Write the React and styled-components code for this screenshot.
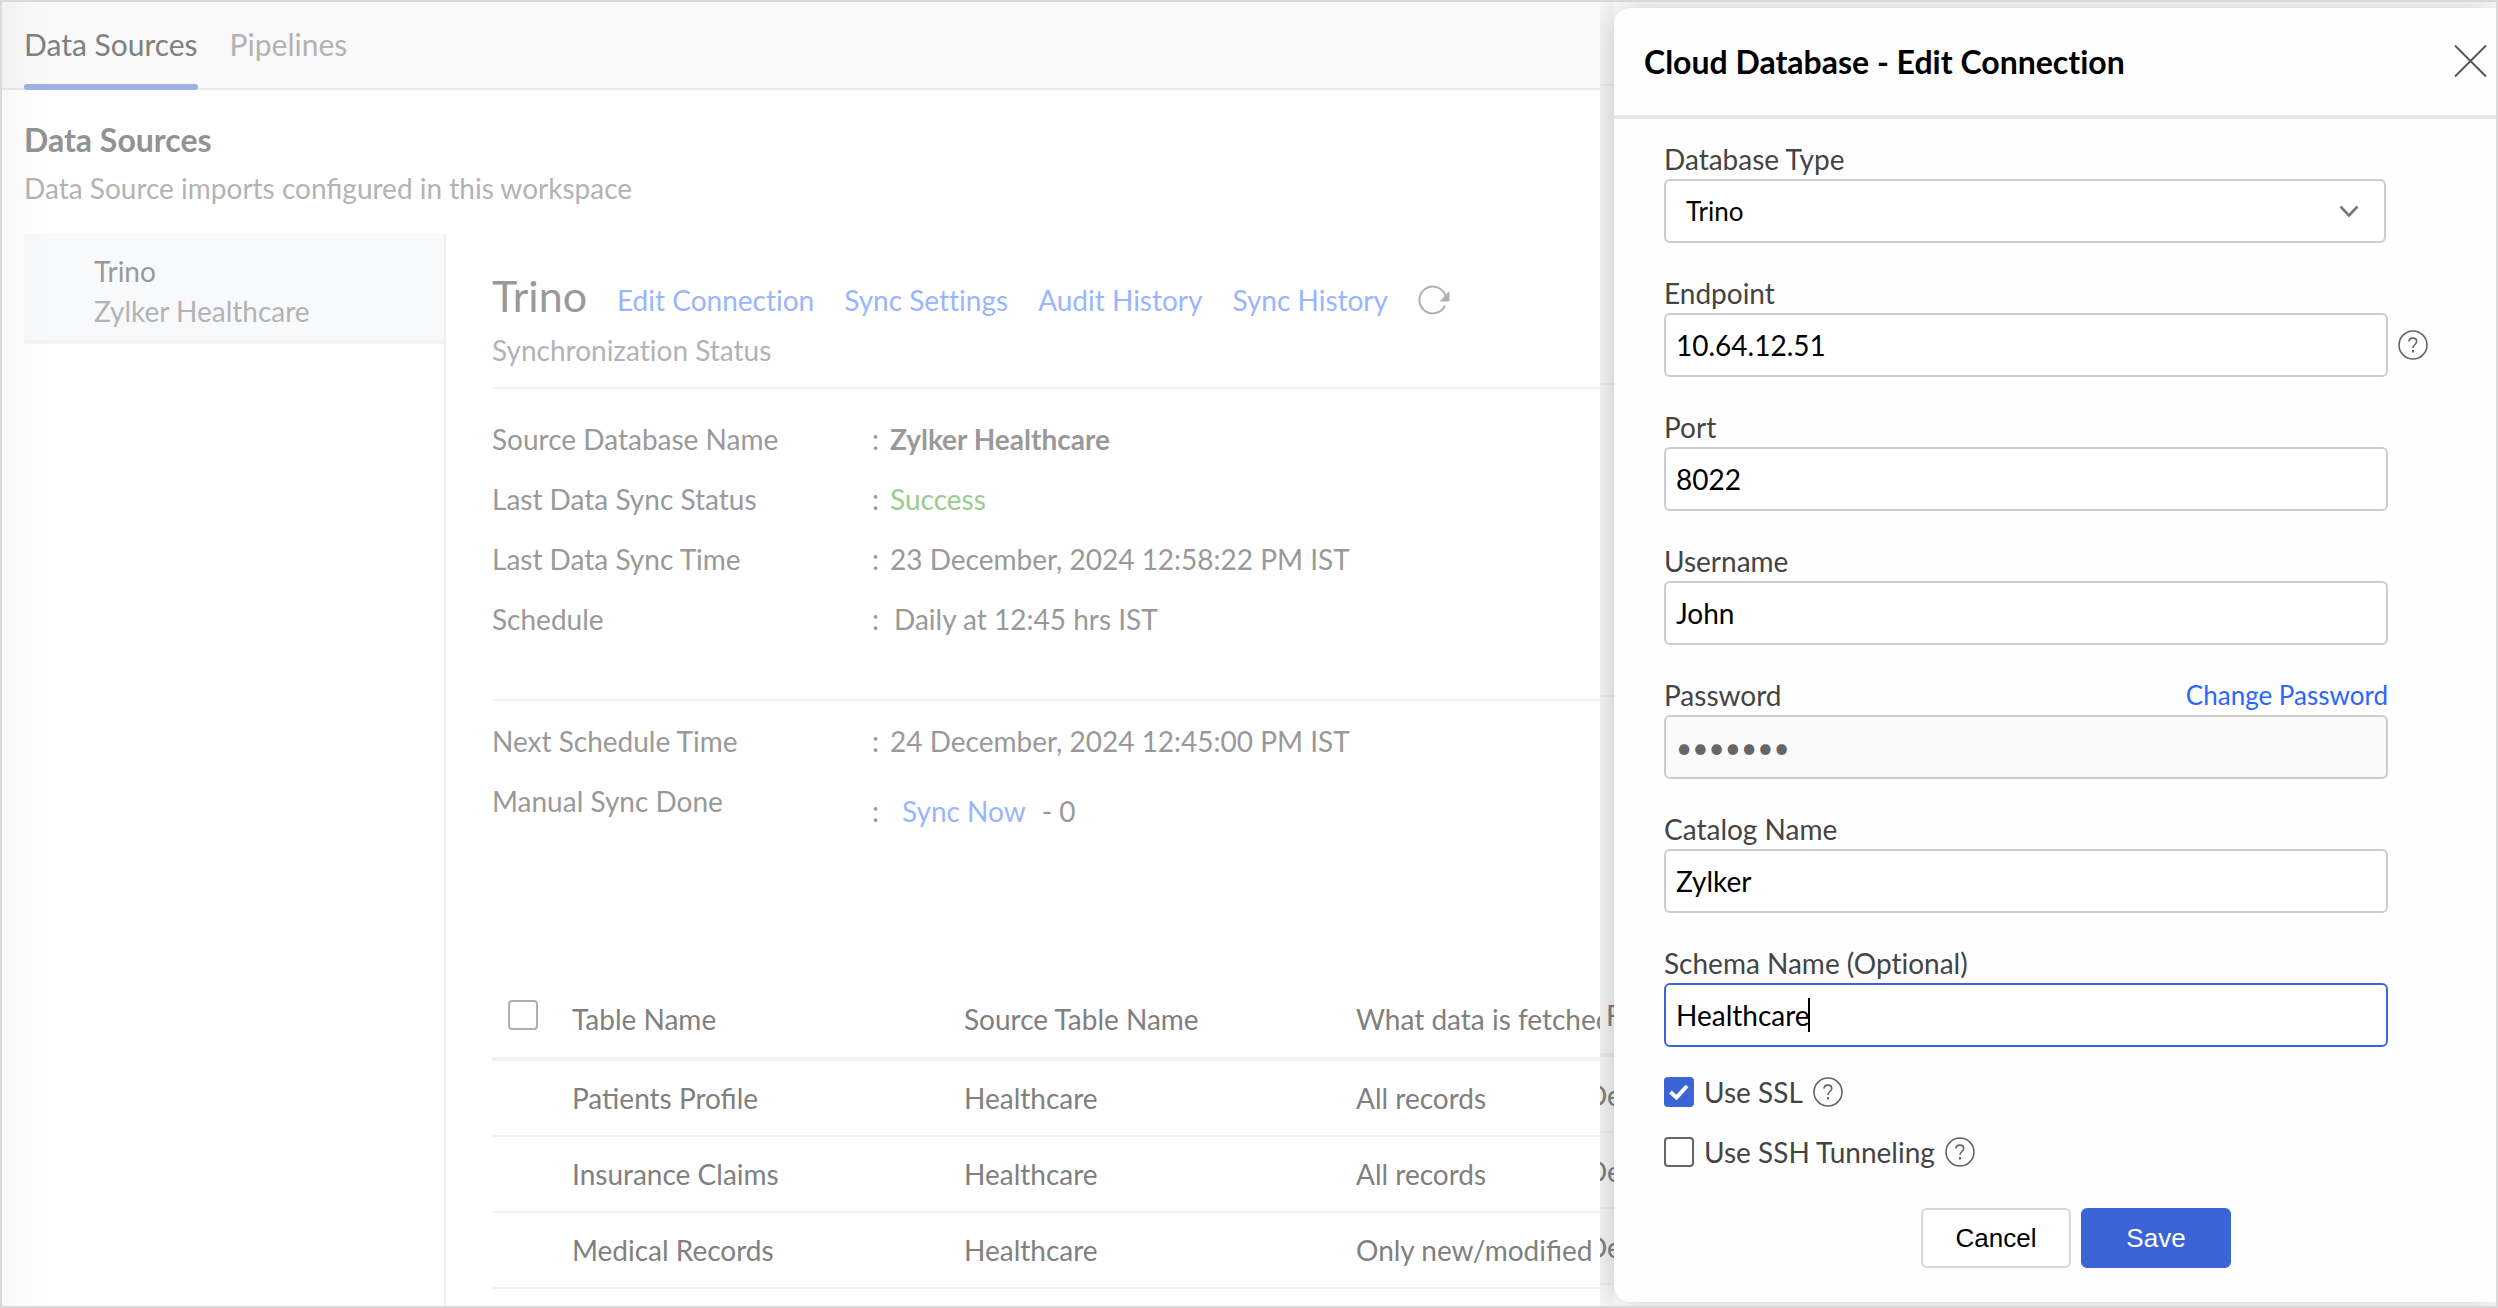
import React, { useState } from "react"
import styled, { createGlobalStyle } from "styled-components"

const GlobalStyle = createGlobalStyle`
    * {
        box-sizing: border-box;
    }

    body {
        margin: 0;
        background-color: #fff;
        font-family: Lato, "Liberation Sans", sans-serif;
        font-size: 28px;
        font-variant-ligatures: no-common-ligatures;
        line-height: 40px;
    }

    h1, h2, p {
        margin: 0;
    }
`;

const Page = styled.div`
    display: flex;
    min-height: 100vh;
    border: 2px solid #d9d9d9;
    overflow: hidden;
`;

/* ---------- workspace ---------- */

const Workspace = styled.main`
    flex: 1;
    min-width: 0;
    display: flex;
    flex-direction: column;
    position: relative;
    overflow: hidden;

    &::after {
        content: "";
        position: absolute;
        top: 0;
        bottom: 0;
        left: 0;
        width: 44px;
        background: linear-gradient(to right, rgba(0, 0, 0, 0.03), rgba(0, 0, 0, 0));
        pointer-events: none;
    }
`;

const TabBar = styled.nav`
    display: flex;
    gap: 32px;
    padding: 0 22px;
    background-color: #f9f9f9;
    border-bottom: 2px solid #ebebeb;
`;

const Tab = styled.a`
    position: relative;
    padding: 22px 0;
    margin-bottom: -2px;
    font-size: 30px;
    line-height: 40px;
    height: 88px;
    color: ${(props) => (props.$active ? "#808080" : "#b3b3b3")};
    text-decoration: none;

    &::after {
        content: "";
        display: ${(props) => (props.$active ? "block" : "none")};
        position: absolute;
        left: 0;
        right: 0;
        bottom: 0;
        height: 6px;
        border-radius: 3px;
        background-color: #9db0e9;
    }
`;

const Intro = styled.header`
    padding: 30px 22px 26px;
`;

const IntroTitle = styled.h1`
    font-size: 32px;
    line-height: 40px;
    color: #929292;
`;

const IntroText = styled.p`
    margin-top: 8px;
    color: #b3b3b3;
    font-variant-ligatures: common-ligatures;
`;

const Columns = styled.div`
    flex: 1;
    display: flex;
    padding-left: 22px;
`;

const SourceList = styled.aside`
    flex: 0 0 422px;
    border-right: 2px solid #f0f0f0;
`;

const SourceItem = styled.div`
    padding: 17px 0 9px 70px;
    background-color: #f8f9fb;
    border-bottom: 4px solid #f2f3f4;
`;

const SourceName = styled.div`
    color: #999;
`;

const SourceDatabase = styled.div`
    color: #b3b3b3;
`;

const Detail = styled.section`
    flex: 1;
    min-width: 0;
    padding: 38px 0 0 46px;
`;

const DetailHeader = styled.div`
    display: flex;
    align-items: flex-end;
    gap: 30px;
`;

const DetailTitle = styled.h2`
    font-size: 43px;
    font-weight: 400;
    line-height: 48px;
    color: #999;
`;

const Link = styled.a`
    color: #99b5ff;
    text-decoration: none;
`;

const RefreshButton = styled.button`
    display: flex;
    align-items: center;
    height: 40px;
    padding: 0;
    border: 0;
    background: none;
    color: #b0b0b0;
`;

const Status = styled.p`
    padding: 10px 0 17px;
    border-bottom: 2px solid #f2f2f2;
    color: #b3b3b3;
`;

const Facts = styled.dl`
    margin: 0;
    padding: ${(props) => (props.$last ? "10px 0 136px" : "20px 0 50px")};
    border-bottom: ${(props) => (props.$last ? "0" : "2px solid #f2f2f2")};
    line-height: 60px;
    color: #999;
`;

const Fact = styled.div`
    display: grid;
    grid-template-columns: 380px 18px 1fr;
    align-items: start;

    &::before {
        content: ":";
        grid-column: 2;
        grid-row: 1;
        padding-top: ${(props) => (props.$lowered ? 10 : 0)}px;
    }
`;

const FactLabel = styled.dt`
    grid-column: 1;
    grid-row: 1;
`;

const FactValue = styled.dd`
    grid-column: 3;
    grid-row: 1;
    margin: 0;
    padding-left: ${(props) => props.$indent || 0}px;
    padding-top: ${(props) => (props.$lowered ? 10 : 0)}px;
    color: ${(props) => props.$color || "inherit"};
    font-weight: ${(props) => (props.$bold ? 700 : 400)};

    a {
        margin-right: 16px;
    }
`;

const Tables = styled.table`
    width: 100%;
    table-layout: fixed;
    border-collapse: separate;
    border-spacing: 0;
    color: #808080;
    font-variant-ligatures: common-ligatures;
    text-align: left;
    white-space: nowrap;
`;

const Th = styled.th`
    width: ${(props) => props.$width || "auto"};
    height: 84px;
    padding: ${(props) => (props.$check ? "0 0 4px 16px" : "4px 0 0")};
    border-bottom: 4px solid #f2f2f2;
    font-weight: 400;
`;

const Td = styled.td`
    height: 76px;
    padding: 0;
    border-bottom: 2px solid #f2f2f2;
`;

/* ---------- drawer ---------- */

const DrawerArea = styled.div`
    flex: 0 0 896px;
    display: flex;
    overflow: hidden;
    background-color: #fff;
`;

const Behind = styled.div`
    flex: 0 0 14px;
    overflow: hidden;
    background-color: #f8f8f8;
    color: #808080;
    white-space: nowrap;
`;

const BehindCell = styled.div`
    display: flex;
    align-items: flex-end;
    height: ${(props) => props.$height}px;
    padding-bottom: ${(props) => props.$bottom || 0}px;
    text-indent: ${(props) => props.$indent || 0}px;
    border-bottom: ${(props) => (props.$heavy ? 4 : 2)}px solid #eee;
`;

const Drawer = styled.form`
    flex: 1;
    display: flex;
    flex-direction: column;
    margin: 6px 0 4px;
    border-radius: 16px 0 0 16px;
    background-color: #fefefe;
    box-shadow: 0 0 36px rgba(0, 0, 0, 0.22);
    color: #444;
`;

const DrawerHeader = styled.header`
    display: flex;
    align-items: center;
    justify-content: space-between;
    height: 111px;
    padding: 0 8px 0 30px;
    border-bottom: 4px solid #e6e6e6;
`;

const DrawerTitle = styled.h2`
    font-size: 32px;
    line-height: 40px;
    color: #000;
`;

const CloseButton = styled.button`
    display: flex;
    padding: 0;
    border: 0;
    background: none;
    color: #555;
`;

const Fields = styled.div`
    display: flex;
    flex-direction: column;
    gap: 30px;
    padding: 20px 0 0 50px;
`;

const FieldGrid = styled.div`
    display: grid;
    grid-template-columns: 1fr 98px;
    column-gap: 10px;
    align-items: center;
`;

const FieldTop = styled.div`
    grid-column: 1;
    display: flex;
    justify-content: space-between;
`;

const ChangeLink = styled.a`
    font-size: 26px;
    color: #2c66fc;
    text-decoration: none;
`;

const InputBox = styled.div`
    grid-column: 1;
    display: flex;
    align-items: center;
    height: 64px;
    padding-left: 10px;
    border: 2px solid ${(props) => (props.$active ? "#3b65d6" : "#ccc")};
    border-radius: 6px;
    background-color: ${(props) => (props.$disabled ? "#fafafa" : "#fff")};
`;

const Input = styled.input`
    flex: ${(props) => (props.$fit ? "none" : 1)};
    field-sizing: ${(props) => (props.$fit ? "content" : "fixed")};
    min-width: 0;
    height: 40px;
    padding: 0;
    border: 0;
    outline: 0;
    background: none;
    font: inherit;
    color: ${(props) => (props.disabled ? "#666" : "#000")};
`;

const Caret = styled.span`
    width: 2px;
    height: 34px;
    margin-left: -2px;
    background-color: #000;
`;

const SelectBox = styled.div`
    position: relative;
    grid-column: 1;
    margin-right: 2px;

    svg {
        position: absolute;
        right: 27px;
        top: 26px;
        pointer-events: none;
    }
`;

const Select = styled.select`
    display: block;
    width: 100%;
    height: 64px;
    padding: 0 60px 0 20px;
    appearance: none;
    border: 2px solid #ccc;
    border-radius: 6px;
    background-color: #fff;
    font: inherit;
    font-size: 26px;
    color: #000;
`;

const Options = styled.div`
    display: flex;
    align-items: center;
    gap: 10px;
    height: 30px;
`;

const CheckWrap = styled.span`
    position: relative;
    display: flex;
    width: 30px;

    svg {
        position: absolute;
        left: 5px;
        top: 7px;
        pointer-events: none;
    }
`;

const CheckInput = styled.input`
    appearance: none;
    width: 30px;
    height: 30px;
    margin: 0;
    border: 2px solid ${(props) => props.$line};
    border-radius: 4px;
    background-color: #fff;

    &:checked {
        border-color: #3b65d6;
        background-color: #3b65d6;
    }
`;

const HelpButton = styled.button`
    display: flex;
    width: 30px;
    padding: 0;
    border: 0;
    background: none;
    color: #666;
`;

const Actions = styled.div`
    display: flex;
    justify-content: center;
    gap: 10px;
    padding: 41px 0 34px 42px;
`;

const Button = styled.button`
    width: 150px;
    height: 60px;
    border: 2px solid ${(props) => (props.$primary ? "#3b65d6" : "#d6d6d6")};
    border-radius: 6px;
    background-color: ${(props) => (props.$primary ? "#3b65d6" : "#fff")};
    color: ${(props) => (props.$primary ? "#fff" : "#000")};
    font-family: "Liberation Sans", Arial, sans-serif;
    font-size: 26px;
`;

function Help({ label })
{
    return(
        <HelpButton type="button" aria-label={label}>
            <svg width="30" height="30" viewBox="0 0 30 30" fill="none" stroke="currentColor">
                <circle cx="15" cy="15" r="14" strokeWidth="1.6"/>
                <path d="M11 11.6C11 9.4 12.7 8.1 14.8 8.1C17 8.1 18.7 9.4 18.7 11.4C18.7 14.4 15 14.6 15 18" strokeWidth="1.6"/>
                <path d="M15 20V22.4" strokeWidth="2"/>
            </svg>
        </HelpButton>
    )
}

function Check({ id, line = "#666", checked, onChange, label })
{
    return(
        <CheckWrap>
            <CheckInput type="checkbox" id={id} $line={line} checked={checked} onChange={onChange} aria-label={label}/>
            {checked &&
                <svg width="20" height="16" viewBox="0 0 20 16" fill="none" stroke="#fff" strokeWidth="4">
                    <path d="M1.5 8L7.5 13.5L18 2"/>
                </svg>
            }
        </CheckWrap>
    )
}

function Field({ id, label, type = "text", value, disabled, active, link, help })
{
    return(
        <FieldGrid>
            <FieldTop>
                <label htmlFor={id}>{label}</label>
                {link && <ChangeLink href="#password">{link}</ChangeLink>}
            </FieldTop>
            <InputBox $active={active} $disabled={disabled}>
                <Input id={id} type={type} defaultValue={value} disabled={disabled} $fit={active}/>
                {active && <Caret/>}
            </InputBox>
            {help && <Help label={help}/>}
        </FieldGrid>
    )
}

const links = ["Edit Connection", "Sync Settings", "Audit History", "Sync History"];

const rows = [
    ["Patients Profile", "Healthcare", "All records"],
    ["Insurance Claims", "Healthcare", "All records"],
    ["Medical Records", "Healthcare", "Only new/modified records"],
];

export default function App()
{
    const [all, setAll] = useState(false);
    const [ssl, setSsl] = useState(true);
    const [ssh, setSsh] = useState(false);

    return(
        <>
            <GlobalStyle/>
            <Page>
                <Workspace>
                    <TabBar>
                        <Tab href="#sources" $active>Data Sources</Tab>
                        <Tab href="#pipelines">Pipelines</Tab>
                    </TabBar>
                    <Intro>
                        <IntroTitle>Data Sources</IntroTitle>
                        <IntroText>Data Source imports configured in this workspace</IntroText>
                    </Intro>
                    <Columns>
                        <SourceList>
                            <SourceItem>
                                <SourceName>Trino</SourceName>
                                <SourceDatabase>Zylker Healthcare</SourceDatabase>
                            </SourceItem>
                        </SourceList>
                        <Detail>
                            <DetailHeader>
                                <DetailTitle>Trino</DetailTitle>
                                {links.map((text) => <Link key={text} href="#detail">{text}</Link>)}
                                <RefreshButton type="button" aria-label="Refresh">
                                    <svg width="32" height="30" viewBox="0 0 32 30" fill="none" stroke="currentColor">
                                        <path d="M27 20.5A13.4 13.4 0 1 1 27.6 11" strokeWidth="2"/>
                                        <path d="M31.5 6V16.5H21.5Z" fill="currentColor" stroke="none"/>
                                    </svg>
                                </RefreshButton>
                            </DetailHeader>
                            <Status>Synchronization Status</Status>
                            <Facts>
                                <Fact>
                                    <FactLabel>Source Database Name</FactLabel>
                                    <FactValue $bold>Zylker Healthcare</FactValue>
                                </Fact>
                                <Fact>
                                    <FactLabel>Last Data Sync Status</FactLabel>
                                    <FactValue $color="#99cc8f">Success</FactValue>
                                </Fact>
                                <Fact>
                                    <FactLabel>Last Data Sync Time</FactLabel>
                                    <FactValue>23 December, 2024 12:58:22 PM IST</FactValue>
                                </Fact>
                                <Fact>
                                    <FactLabel>Schedule</FactLabel>
                                    <FactValue $indent={4}>Daily at 12:45 hrs IST</FactValue>
                                </Fact>
                            </Facts>
                            <Facts $last>
                                <Fact>
                                    <FactLabel>Next Schedule Time</FactLabel>
                                    <FactValue>24 December, 2024 12:45:00 PM IST</FactValue>
                                </Fact>
                                <Fact $lowered>
                                    <FactLabel>Manual Sync Done</FactLabel>
                                    <FactValue $indent={12} $lowered><Link href="#sync">Sync Now</Link>- 0</FactValue>
                                </Fact>
                            </Facts>
                            <Tables>
                                <thead>
                                    <tr>
                                        <Th $width="80px" $check>
                                            <Check line="#b0b0b0" checked={all} onChange={() => setAll(!all)} label="Select all tables"/>
                                        </Th>
                                        <Th $width="392px">Table Name</Th>
                                        <Th $width="392px">Source Table Name</Th>
                                        <Th>What data is fetched</Th>
                                    </tr>
                                </thead>
                                <tbody>
                                    {rows.map((row) => (
                                        <tr key={row[0]}>
                                            <Td/>
                                            {row.map((cell, i) => <Td key={i}>{cell}</Td>)}
                                        </tr>
                                    ))}
                                </tbody>
                            </Tables>
                        </Detail>
                    </Columns>
                </Workspace>
                <DrawerArea>
                    <Behind aria-hidden="true">
                        <BehindCell $height={84}/>
                        <BehindCell $height={299}/>
                        <BehindCell $height={312}/>
                        <BehindCell $height={360} $bottom={18} $indent={6} $heavy>F</BehindCell>
                        <BehindCell $height={76} $bottom={16} $indent={-14}>De</BehindCell>
                        <BehindCell $height={76} $bottom={16} $indent={-14}>De</BehindCell>
                        <BehindCell $height={76} $bottom={16} $indent={-14}>De</BehindCell>
                    </Behind>
                    <Drawer onSubmit={(e) => e.preventDefault()}>
                        <DrawerHeader>
                            <DrawerTitle>Cloud Database - Edit Connection</DrawerTitle>
                            <CloseButton type="button" aria-label="Close">
                                <svg width="34" height="34" viewBox="0 0 34 34" stroke="currentColor" strokeWidth="2">
                                    <path d="M1 0.5L32 31.5M32 0.5L1 31.5"/>
                                </svg>
                            </CloseButton>
                        </DrawerHeader>
                        <Fields>
                            <FieldGrid>
                                <FieldTop>
                                    <label htmlFor="type">Database Type</label>
                                </FieldTop>
                                <SelectBox>
                                    <Select id="type" defaultValue="Trino">
                                        <option>Trino</option>
                                    </Select>
                                    <svg width="20" height="13" viewBox="0 0 20 13" fill="none" stroke="#777" strokeWidth="2.6">
                                        <path d="M1.5 1.5L10 10.5L18.5 1.5"/>
                                    </svg>
                                </SelectBox>
                            </FieldGrid>
                            <Field id="endpoint" label="Endpoint" value="10.64.12.51" help="Endpoint help"/>
                            <Field id="port" label="Port" value="8022"/>
                            <Field id="username" label="Username" value="John"/>
                            <Field id="password" label="Password" type="password" value="1234567" link="Change Password" disabled/>
                            <Field id="catalog" label="Catalog Name" value="Zylker"/>
                            <Field id="schema" label="Schema Name (Optional)" value="Healthcare" active/>
                            <Options>
                                <Check id="ssl" checked={ssl} onChange={() => setSsl(!ssl)}/>
                                <label htmlFor="ssl">Use SSL</label>
                                <Help label="SSL help"/>
                            </Options>
                            <Options>
                                <Check id="ssh" checked={ssh} onChange={() => setSsh(!ssh)}/>
                                <label htmlFor="ssh">Use SSH Tunneling</label>
                                <Help label="SSH tunneling help"/>
                            </Options>
                        </Fields>
                        <Actions>
                            <Button type="button">Cancel</Button>
                            <Button type="submit" $primary>Save</Button>
                        </Actions>
                    </Drawer>
                </DrawerArea>
            </Page>
        </>
    )
}
